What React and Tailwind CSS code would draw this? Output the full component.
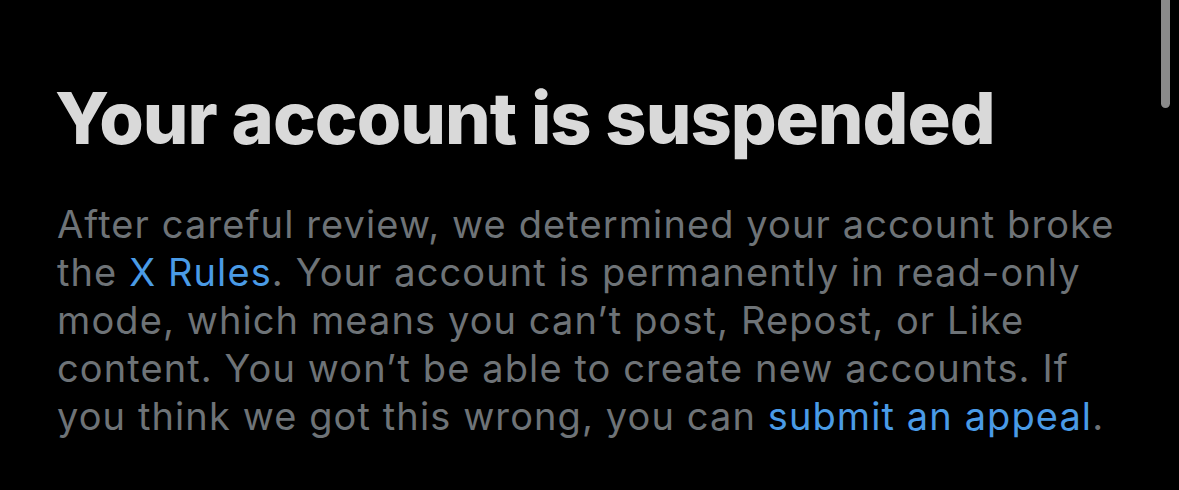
export default function App() {
  return (
    <div className="relative h-[490px] w-[1179px] overflow-hidden bg-black font-['Inter',sans-serif]">
      <div className="pl-[57px] pt-[78px]">
        <h1 className="-ml-[2px] whitespace-nowrap text-[72px] font-extrabold leading-[80px] tracking-[-1px] text-[#d9d9d9]">
          Your account is suspended
        </h1>
        <p className="mt-[42px] whitespace-nowrap text-[38px] leading-[48px] tracking-[1.1px] text-[#6e7377]">
          After careful review, we determined your account broke
          <br />
          the <span className="text-[#4a9be6]">X Rules</span>. Your account is permanently in read-only
          <br />
          mode, which means you can’t post, Repost, or Like
          <br />
          content. You won’t be able to create new accounts. If
          <br />
          you think we got this wrong, you can{' '}
          <span className="text-[#4a9be6]">submit an appeal</span>.
        </p>
      </div>
      <div className="absolute right-[9px] top-[-8px] h-[116px] w-[9px] rounded-full bg-[#8a8a8a]" />
    </div>
  )
}
